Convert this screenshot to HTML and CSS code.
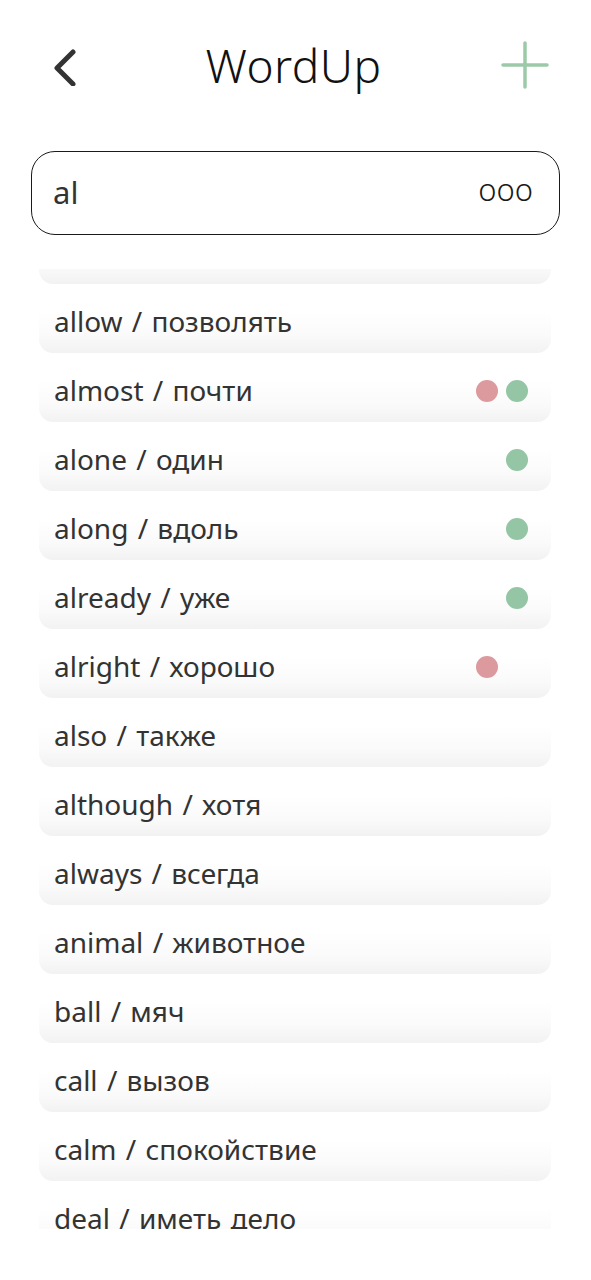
FILE: index.html
```html
<!DOCTYPE html>
<html lang="ru">
<head>
<meta charset="utf-8">
<title>WordUp</title>
<link rel="stylesheet" href="styles.css">
</head>
<body>
<div class="app">
  <header class="topbar">
    <button class="icon-btn back" aria-label="Назад">
      <svg width="30" height="40" viewBox="0 0 30 40"><polyline points="21,6 5,22 21,38" fill="none" stroke="#333" stroke-width="5" stroke-linecap="round" stroke-linejoin="round"/></svg>
    </button>
    <h1 class="title">WordUp</h1>
    <button class="icon-btn add" aria-label="Добавить">
      <svg width="48" height="48" viewBox="0 0 48 48"><path d="M24 2 V46 M2 24 H46" fill="none" stroke="#9ccaa9" stroke-width="3.5" stroke-linecap="round"/></svg>
    </button>
  </header>

  <div class="search">
    <span class="query">al</span>
    <span class="more">ooo</span>
  </div>

  <div class="list">
    <div class="list-inner">
      <div class="row"><span class="word"></span></div>
      <div class="row"><span class="word">allow / позволять</span></div>
      <div class="row"><span class="word">almost / почти</span><span class="marks"><i class="dot red"></i><i class="dot green"></i></span></div>
      <div class="row"><span class="word">alone / один</span><span class="marks"><i class="dot empty"></i><i class="dot green"></i></span></div>
      <div class="row"><span class="word">along / вдоль</span><span class="marks"><i class="dot empty"></i><i class="dot green"></i></span></div>
      <div class="row"><span class="word">already / уже</span><span class="marks"><i class="dot empty"></i><i class="dot green"></i></span></div>
      <div class="row"><span class="word">alright / хорошо</span><span class="marks"><i class="dot red"></i><i class="dot empty"></i></span></div>
      <div class="row"><span class="word">also / также</span></div>
      <div class="row"><span class="word">although / хотя</span></div>
      <div class="row"><span class="word">always / всегда</span></div>
      <div class="row"><span class="word">animal / животное</span></div>
      <div class="row"><span class="word">ball / мяч</span></div>
      <div class="row"><span class="word">call / вызов</span></div>
      <div class="row"><span class="word">calm / спокойствие</span></div>
      <div class="row"><span class="word">deal / иметь дело</span></div>
    </div>
  </div>
</div>
</body>
</html>
```

FILE: styles.css
```css
* { box-sizing: border-box; }

html, body {
  margin: 0;
  padding: 0;
  background: #ffffff;
}

body {
  font-family: "Noto Sans", "Open Sans", sans-serif;
  color: #333333;
}

.app {
  width: 591px;
  height: 1280px;
  overflow: hidden;
}

.topbar {
  height: 130px;
  padding: 40px 42px 0 52px;
  display: flex;
  align-items: flex-start;
  justify-content: space-between;
}

.icon-btn {
  border: 0;
  background: none;
  padding: 0;
  display: flex;
}

.back { margin-top: 6px; }
.add { margin-top: 1px; }

.title {
  margin: 0 0 0 4px;
  font-weight: 300;
  font-size: 46px;
  line-height: 50px;
  letter-spacing: 0.5px;
  color: #111111;
}

.search {
  margin: 21px 31px 0 31px;
  height: 84px;
  border: 1.5px solid #1a1a1a;
  border-radius: 24px;
  display: flex;
  align-items: center;
  justify-content: space-between;
  padding: 0 26px 0 21px;
}

.query {
  font-size: 31px;
  color: #333333;
  line-height: 1;
  margin-top: -2px;
}

.more {
  font-size: 31px;
  font-weight: 300;
  color: #1a1a1a;
  line-height: 1;
  letter-spacing: 0;
  margin-top: -8px;
}

.list {
  margin-top: 34px;
  height: 960px;
  overflow: hidden;
}

.list-inner {
  margin-top: -54px;
  padding: 0 40px 0 39px;
}

.row {
  height: 69px;
  border-radius: 14px;
  background: linear-gradient(to bottom, #ffffff 40%, #fafafa 75%, #f2f2f2 100%);
  display: flex;
  align-items: center;
  justify-content: space-between;
  padding: 4px 23px 0 15px;
}

.word {
  font-size: 28px;
  line-height: 1;
  color: #333333;
  word-spacing: 2px;
}

.marks {
  display: flex;
  gap: 8px;
  margin-top: 2px;
}

.dot {
  width: 22px;
  height: 22px;
  border-radius: 50%;
  display: block;
}

.dot.red { background: #dc9a9e; }
.dot.green { background: #94c6a6; }
.dot.empty { background: transparent; }
```
